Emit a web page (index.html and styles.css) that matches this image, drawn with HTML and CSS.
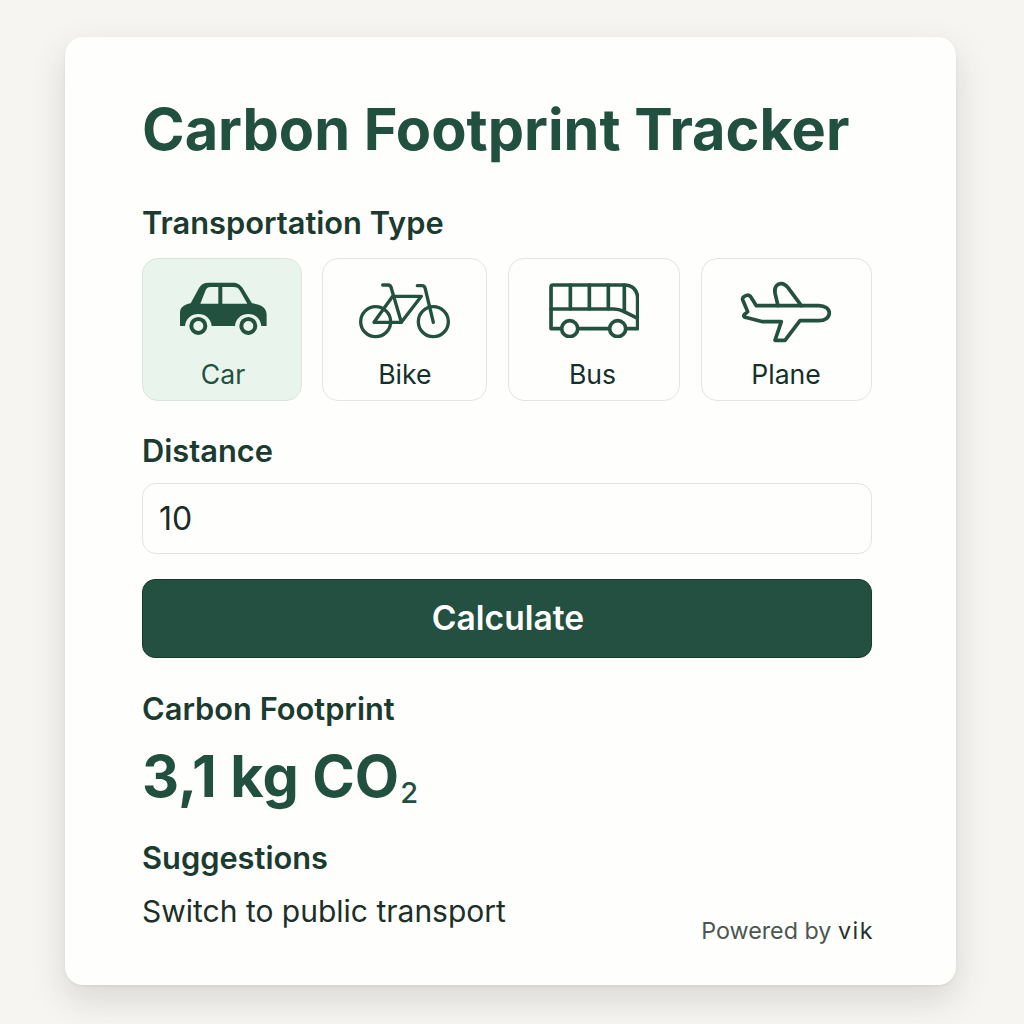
FILE: index.html
```html
<!DOCTYPE html>
<html lang="en">
<head>
<meta charset="utf-8">
<title>Carbon Footprint Tracker</title>
<link rel="stylesheet" href="styles.css">
</head>
<body>
<main class="card">
  <h1 class="title">Carbon Footprint Tracker</h1>
  <h2 class="label label-type">Transportation Type</h2>
  <div class="tiles">
    <div class="tile tile-active">
      <svg class="icon icon-car" viewBox="150 100 262 160">
        <path class="solid" d="M150 232V192C150 176 162 168 182 164L207 118C213 107 222 102 235 102H308C322 102 330 107 338 118L366 164C394 168 410 176 410 198V232H394C392 210 376 196 355 196C334 196 317 210 315 232H245C243 210 226 196 205 196C184 196 167 210 165 232Z"/>
        <path class="win" d="M211 165L226 127C229 119 233 115 242 115H265V165Z"/>
        <path class="win" d="M277 115H310C320 115 325 118 330 126L352 165H277Z"/>
        <circle class="wheel" cx="205" cy="232" r="21"/>
        <circle class="wheel" cx="355" cy="232" r="21"/>
      </svg>
      <span class="tile-name">Car</span>
    </div>
    <div class="tile">
      <svg class="icon icon-bike" viewBox="685 100 276 168">
        <circle class="line thin" cx="735" cy="216" r="45"/>
        <circle class="line thin" cx="908" cy="216" r="45"/>
        <path class="line thin" d="M730 218H812L872 140H786Z"/>
        <path class="line thin" d="M756 106H772C778 106 781 110 782 116L812 218"/>
        <path class="line thin" d="M860 108H874C880 108 883 112 884 118L908 218"/>
      </svg>
      <span class="tile-name">Bike</span>
    </div>
    <div class="tile">
      <svg class="icon icon-bus" viewBox="146 100 272 166">
        <path class="line" d="M152 112C152 108 154 106 158 106H372C396 106 412 122 412 146V237H152Z"/>
        <path class="line" d="M152 178H340C352 178 360 180 370 185L412 206"/>
        <path class="line" d="M210 106V178M267 106V178M324 106V178M372 106V186"/>
        <circle class="line hub" cx="208" cy="237" r="24"/>
        <circle class="line hub" cx="352" cy="237" r="24"/>
      </svg>
      <span class="tile-name tile-name-bus">Bus</span>
    </div>
    <div class="tile">
      <svg class="icon icon-plane" viewBox="722 94 274 186">
        <path class="line" d="M771 168H958C978 168 990 178 990 190C990 203 978 213 958 213H902L857 272H827L846 216H790L738 203C733 202 732 198 735 195L745 186L730 150C729 145 731 142 735 140L742 137C747 135 750 137 753 140Z"/>
        <path class="line" d="M836 168L827 130C824 112 834 100 848 102C856 103 861 108 866 114L906 168"/>
      </svg>
      <span class="tile-name">Plane</span>
    </div>
  </div>
  <h2 class="label label-distance">Distance</h2>
  <div class="input">10</div>
  <button class="calc" type="button">Calculate</button>
  <h2 class="label label-result">Carbon Footprint</h2>
  <p class="result">3,1 kg CO<span class="sub">2</span></p>
  <h2 class="label label-suggest">Suggestions</h2>
  <div class="foot">
    <p class="suggest">Switch to public transport</p>
    <p class="powered">Powered by <span class="brand">vik</span></p>
  </div>
</main>
</body>
</html>
```

FILE: styles.css
```css
* { box-sizing: border-box; }
html, body { margin: 0; height: 100%; }
body {
  background: #f6f5f2;
  font-family: Inter, "Noto Sans", sans-serif;
  color: #1c3a30;
  padding: 37px 68px 39px 65px;
}
.card {
  width: 891px;
  height: 948px;
  background: #fefefc;
  border-radius: 18px;
  padding: 52px 84px 0 77px;
  box-shadow: 0 14px 34px rgba(60, 58, 50, 0.16), 0 1px 3px rgba(60, 58, 50, 0.08);
}
.title {
  margin: 0;
  font-size: 57.65px;
  line-height: 80px;
  font-weight: 700;
  color: #214f40;
  white-space: nowrap;
}
.label {
  margin: 0;
  font-size: 30.8px;
  line-height: 36px;
  font-weight: 600;
  color: #1b3a30;
}
.label-type { margin-top: 36px; }
.tiles {
  display: grid;
  grid-template-columns: 160px 165px 172.4px 171px;
  column-gap: 20.4px;
  margin-top: 17px;
}
.tile {
  height: 143px;
  border: 1px solid #e4e5e1;
  border-radius: 16px;
  display: flex;
  flex-direction: column;
  align-items: center;
  background: #fefefc;
}
.tile-active { background: #e9f4ec; border-color: #dbe5dc; padding-left: 2px; }
.icon { display: block; flex: none; }
.icon-car { width: 87.3px; height: 53.3px; margin: 23px 0 22px 1px; }
.icon-bike { width: 92px; height: 56px; margin: 24px 0 18px 1px; }
.icon-bus { width: 90.7px; height: 55.3px; margin: 24px 0 19px; }
.icon-plane { width: 91.3px; height: 62px; margin-top: 22px; margin-bottom: 14px; }
.tile-name {
  font-size: 26.6px;
  line-height: 34px;
  color: #14302a;
}
.tile-name-bus { margin-right: 3px; }
.tile-active .tile-name { color: #23513f; }
.solid { fill: #23513f; }
.win { fill: #e9f4ec; }
.wheel { fill: #e9f4ec; stroke: #23513f; stroke-width: 12; }
.line { fill: none; stroke: #23513f; stroke-width: 11; stroke-linejoin: round; stroke-linecap: round; }
.thin { stroke-width: 10; }
.hub { fill: #fefefc; }
.label-distance { margin-top: 32px; }
.input {
  margin-top: 14px;
  height: 71px;
  border: 1px solid #e4e5e1;
  border-radius: 14px;
  padding-left: 16px;
  font-size: 32px;
  line-height: 69px;
  color: #1b2b26;
  background: #fefefc;
}
.calc {
  display: block;
  width: 100%;
  height: 79px;
  margin-top: 25px;
  padding: 0 0 2px 2px;
  border: 1px solid #173a2e;
  border-radius: 13px;
  background: #235040;
  color: #fff;
  font: 600 33.6px Inter, "Noto Sans", sans-serif;
}
.label-result { margin-top: 33px; }
.result {
  margin: 13px 0 0;
  font-size: 57.5px;
  line-height: 72px;
  font-weight: 650;
  color: #214f40;
  white-space: nowrap;
}
.sub { font-size: 29px; font-weight: 500; line-height: 0; vertical-align: -6px; margin-left: 1px; }
.label-suggest { margin-top: 28px; }
.foot {
  display: flex;
  justify-content: space-between;
  align-items: flex-end;
  margin-top: 16px;
}
.suggest {
  margin: 0;
  font-size: 30px;
  line-height: 38px;
  color: #1c2f29;
}
.powered {
  margin: 0 -2px -16px 0;
  font-size: 23.3px;
  line-height: 30px;
  color: #4b5652;
}
.brand { color: #24312d; letter-spacing: 1.5px; }
```
